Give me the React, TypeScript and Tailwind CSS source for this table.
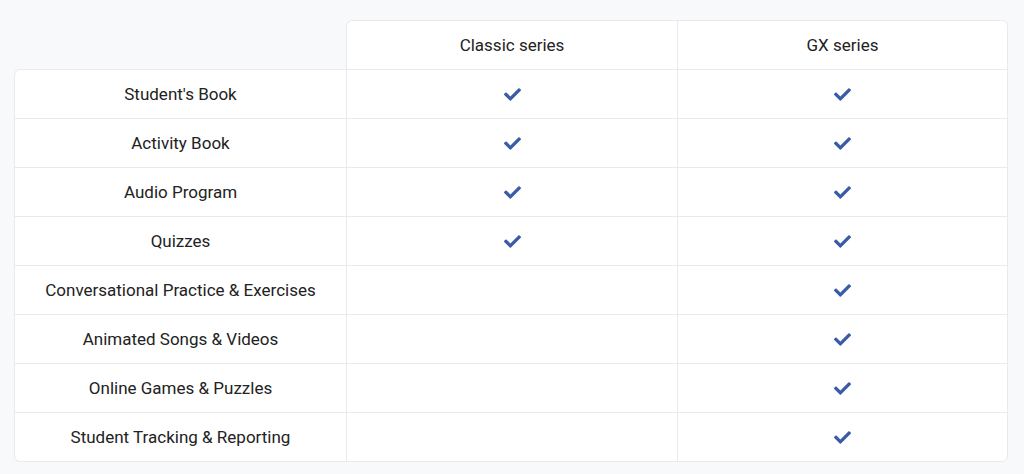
import { FaCheck } from 'react-icons/fa'

const ROWS: { label: string; classic: boolean; gx: boolean }[] = [
  { label: "Student's Book", classic: true, gx: true },
  { label: 'Activity Book', classic: true, gx: true },
  { label: 'Audio Program', classic: true, gx: true },
  { label: 'Quizzes', classic: true, gx: true },
  { label: 'Conversational Practice & Exercises', classic: false, gx: true },
  { label: 'Animated Songs & Videos', classic: false, gx: true },
  { label: 'Online Games & Puzzles', classic: false, gx: true },
  { label: 'Student Tracking & Reporting', classic: false, gx: true },
]

function Check() {
  return <FaCheck className="w-[17px] h-[17px] text-[#3a5ca6]" />
}

export default function App() {
  const last = ROWS.length - 1
  return (
    <div
      className="w-[1024px] h-[474px] bg-[#f8f9fb] pt-[20px] pl-[14px] text-[17px] text-[#222]"
      style={{ fontFamily: 'Roboto, "Liberation Sans", sans-serif' }}
    >
      <div className="grid grid-cols-[332px_331px_331px]">
        {/* header */}
        <div />
        <div className="h-[49px] pt-[2px] bg-white border-t border-l border-[#e8eaee] rounded-tl-md flex items-center justify-center">
          Classic series
        </div>
        <div className="h-[49px] pt-[2px] bg-white border-t border-l border-r border-[#e8eaee] rounded-tr-md flex items-center justify-center">
          GX series
        </div>

        {ROWS.map((r, i) => {
          const isLast = i === last
          return (
            <div key={r.label} className="contents">
              <div
                className={
                  'pt-[2px] bg-white border-t border-l border-[#e8eaee] flex items-center justify-center ' +
                  (i === 0 ? 'rounded-tl-md ' : '') +
                  (isLast ? 'h-[50px] border-b rounded-bl-md' : 'h-[49px]')
                }
              >
                {r.label}
              </div>
              <div
                className={
                  'bg-white border-t border-l border-[#e8eaee] flex items-center justify-center ' +
                  (isLast ? 'h-[50px] border-b' : 'h-[49px]')
                }
              >
                {r.classic && <Check />}
              </div>
              <div
                className={
                  'bg-white border-t border-l border-r border-[#e8eaee] flex items-center justify-center ' +
                  (isLast ? 'h-[50px] border-b rounded-br-md' : 'h-[49px]')
                }
              >
                {r.gx && <Check />}
              </div>
            </div>
          )
        })}
      </div>
    </div>
  )
}
